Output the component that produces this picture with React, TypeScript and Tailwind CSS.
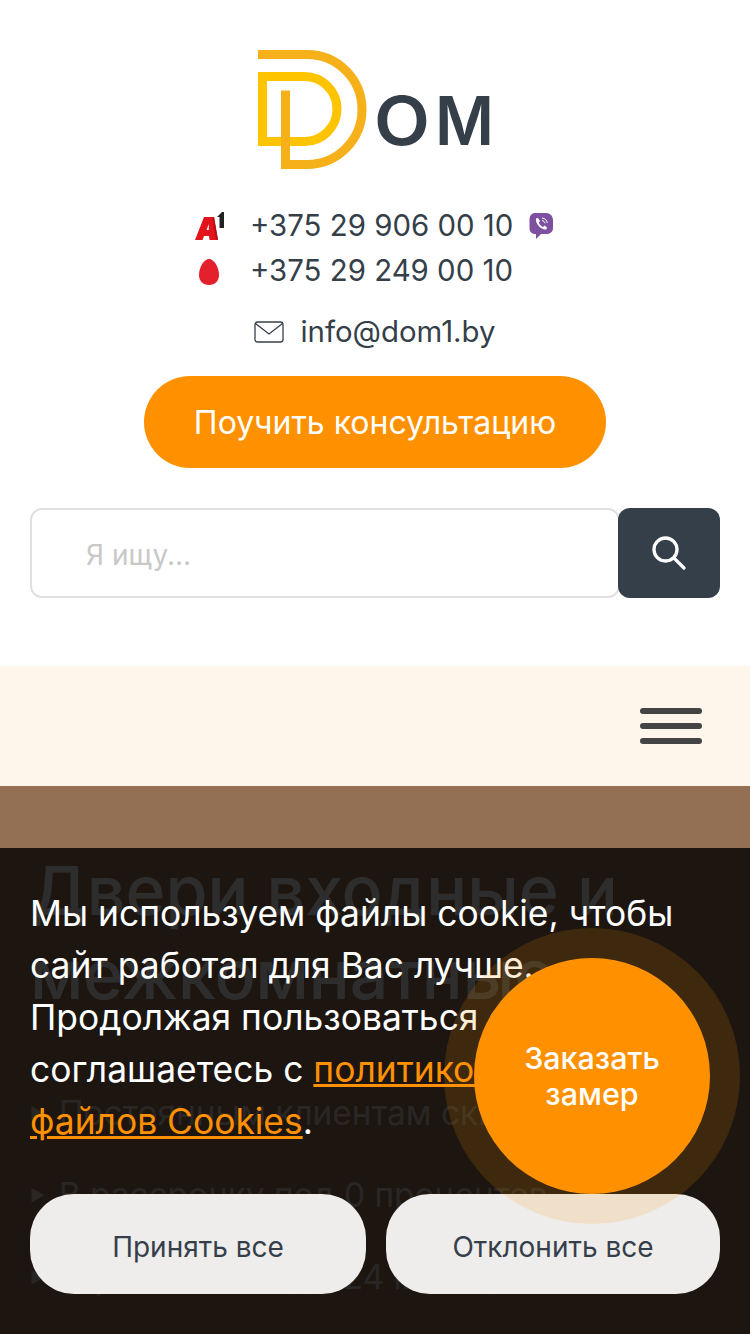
export default function App() {
  return (
    <div className="relative h-[1334px] w-[750px] overflow-hidden bg-white font-['Inter',sans-serif] text-[#353f4a]">
      <header className="flex flex-col items-center">
        <svg className="mt-[50px] block" width="240" height="120" viewBox="255 50 240 120">
          <path d="M262.500 76.500H304.500A32.500 32.500 0 0 1 304.500 141.500H262.500Z" fill="none" stroke="#ffc400" strokeWidth="9" />
          <path d="M258 54.500H307A55 55 0 0 1 307 164.500H285.500V90.500" fill="none" stroke="#f5b01a" strokeWidth="9" />
          <text y="145" fontFamily="Inter, sans-serif" fontSize="67" fontWeight="600" fill="#353f4a">
            <tspan x="374" textLength="56" lengthAdjust="spacingAndGlyphs">O</tspan>
            <tspan x="435" textLength="59" lengthAdjust="spacingAndGlyphs">M</tspan>
          </text>
        </svg>
        <div className="mt-[33px] flex h-[46px] w-[360px] items-center whitespace-nowrap text-[29.400px]">
          <svg className="mr-[25px] shrink-0" width="30" height="30" viewBox="0 0 30 30">
            <path d="M0 29L9 6H19L23 29H14.500L14 25H9L7.500 29ZM11.500 19H13.800V13Z" fill="#e3131b" fillRule="evenodd" />
            <path d="M19 6L23 29H21L17.500 6Z" fill="#b30f16" />
            <path d="M22 6L27 1H29V17H24.500V6Z" fill="#222" />
          </svg>
          <span>+375 29 906 00 10</span>
          <svg className="ml-[15px] shrink-0" width="26" height="28" viewBox="0 0 26 28">
            <path d="M7 1H18C22 1 25 4 25 8V16C25 20 22 22 18 22H13L8 27V22C4 22 1.500 20 1.500 16V8C1.500 4 3.500 1 7 1Z" fill="#7d51a0" />
            <path d="M8 6.500L10 6L12 9L10.800 10.500C11.500 12.500 13 14 15 15L16.500 13.500L19 15.500L18.300 17.500C14 18.500 7 12 8 6.500Z" fill="#fff" />
            <path d="M14 6C17 6.300 19 8.300 19.300 11M14 8.500C15.500 8.700 16.800 9.800 17 11.300" fill="none" stroke="#fff" strokeWidth="1" />
          </svg>
        </div>
        <div className="flex h-[46px] w-[360px] items-center whitespace-nowrap pb-[1px] text-[29.400px]">
          <svg className="ml-[3px] mr-[30px] shrink-0" width="22" height="28" viewBox="0 0 22 28">
            <path d="M11 1C16 1 21 9 21 17C21 23 17 27 11 27C5 27 1 23 1 17C1 9 6 1 11 1Z" fill="#e4202c" />
          </svg>
          <span>+375 29 249 00 10</span>
        </div>
        <div className="mt-[14px] flex h-[46px] items-center whitespace-nowrap text-[29.400px]">
          <svg className="mr-[16px] shrink-0" width="30" height="24" viewBox="0 0 30 24">
            <rect x="1" y="2" width="28" height="20" rx="2.500" fill="none" stroke="#353f4a" strokeWidth="1.300" />
            <path d="M1.500 3.500L15 14L28.500 3.500" fill="none" stroke="#353f4a" strokeWidth="1.300" />
          </svg>
          <span>info@dom1.by</span>
        </div>
        <button className="mt-[21px] h-[92px] w-[462px] rounded-[46px] bg-[#ff9100] pt-[2px] text-[32px] text-white">Поучить консультацию</button>
      </header>
      <form className="mt-[40px] flex px-[30px]">
        <div className="flex h-[90px] flex-1 items-center rounded-[12px] border-2 border-[#e0e0e0] pl-[54px] pt-[3px] text-[28px] text-[#c8c8c8]">Я ищу...</div>
        <button type="button" className="-ml-[2px] flex h-[90px] w-[102px] items-center justify-center rounded-[12px] bg-[#353f4a]">
          <svg width="36" height="36" viewBox="0 0 36 36" fill="none" stroke="#fff" strokeWidth="3.300" strokeLinecap="round">
            <circle cx="14.500" cy="14.500" r="11.500" />
            <path d="M22.800 22.800L33 33" />
          </svg>
        </button>
      </form>
      <nav className="mt-[68px] flex h-[120px] items-center justify-end bg-[#fef5eb] pr-[48px]">
        <div className="flex h-[36px] w-[62px] flex-col justify-between">
          <span className="h-[6px] rounded-full bg-[#444444]"></span>
          <span className="-mt-[1px] h-[6px] rounded-full bg-[#444444]"></span>
          <span className="h-[6px] rounded-full bg-[#444444]"></span>
        </div>
      </nav>
      <section className="h-[600px] bg-[#937053] px-[30px] pt-[62px] text-white">
        <h1 className="text-[68px] font-medium leading-[84px]">Двери входные и межкомнатные</h1>
        <ul className="mt-[80px] flex flex-col gap-[48px] text-[33.400px] leading-[34px] opacity-70">
          <li className="flex items-center gap-[14px] whitespace-nowrap"><span className="text-[16px]">▶</span>Постоянным клиентам скидка</li>
          <li className="flex items-center gap-[14px] whitespace-nowrap"><span className="text-[16px]">▶</span>В рассрочку под 0 процентов</li>
          <li className="flex items-center gap-[14px] whitespace-nowrap"><span className="text-[16px]">▶</span>Гарантия от 6 до 24 месяцев</li>
        </ul>
      </section>
      <div className="absolute inset-x-0 bottom-0 h-[486px] bg-[#040303]/[.83] px-[30px] pt-[40px]">
        <p className="text-[35.400px] leading-[52px] text-white">
          Мы используем файлы cookie, чтобы сайт работал для Вас лучше. Продолжая пользоваться сайтом, Вы соглашаетесь с <a className="text-[#ff9100] underline">политикой обработки файлов Cookies</a>.
        </p>
        <div className="absolute inset-x-[30px] bottom-[40px] flex gap-[20px] text-[28px]">
          <button className="h-[100px] w-[336px] rounded-[44px] bg-[#eeedec] pt-[5px]">Принять все</button>
          <button className="h-[100px] w-[334px] rounded-[44px] bg-[#eeedec] pt-[5px]">Отклонить все</button>
        </div>
      </div>
      <div className="absolute left-[444px] top-[928px] flex h-[296px] w-[296px] items-center justify-center rounded-full bg-[#ff9100]/[.15]">
        <div className="flex h-[236px] w-[236px] items-center justify-center rounded-full bg-[#ff9100] text-center text-[30.500px] font-medium leading-[36px] text-white">Заказать<br />замер</div>
      </div>
    </div>
  );
}
